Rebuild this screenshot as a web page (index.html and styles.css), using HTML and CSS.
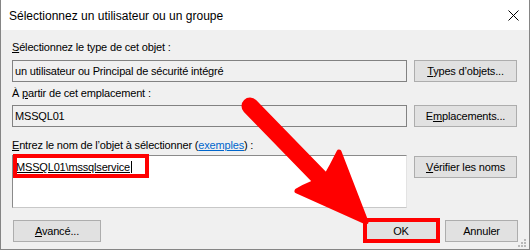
FILE: index.html
```html
<!DOCTYPE html>
<html lang="fr">
<head>
<meta charset="utf-8">
<title>Sélectionnez un utilisateur ou un groupe</title>
<link rel="stylesheet" href="styles.css">
</head>
<body>
<div class="window">
  <div class="titlebar">
    <span class="title">Sélectionnez un utilisateur ou un groupe</span>
    <svg class="close" width="11" height="11" viewBox="0 0 11 11"><path d="M0.5 0.5 L10.5 10.5 M10.5 0.5 L0.5 10.5" stroke="#000" stroke-width="1" fill="none"/></svg>
  </div>
  <div class="content">
    <div class="label l1"><u>S</u>électionnez le type de cet objet :</div>
    <div class="row r1">
      <div class="field">un utilisateur ou Principal de sécurité intégré</div>
      <div class="btn"><span><u>T</u>ypes d’objets...</span></div>
    </div>
    <div class="label l2">À <u>p</u>artir de cet emplacement :</div>
    <div class="row r2">
      <div class="field">MSSQL01</div>
      <div class="btn"><span>E<u>m</u>placements...</span></div>
    </div>
    <div class="label l3"><u>E</u>ntrez le nom de l’objet à sélectionner (<span class="link">exemples</span>) :</div>
    <div class="row r3">
      <div class="area"><span class="name">MSSQL01\mssqlservice</span></div>
      <div class="btn verify"><span><u>V</u>érifier les noms</span></div>
    </div>
    <div class="footer">
      <div class="btn adv"><span><u>A</u>vancé...</span></div>
      <div class="spacer"></div>
      <div class="btn ok"><span>OK</span></div>
      <div class="btn cancel"><span>Annuler</span></div>
    </div>
  </div>
  <svg class="grip" width="9" height="9" viewBox="0 0 9 9">
    <rect x="6" y="0" width="2" height="2" fill="#b8b8b8"/>
    <rect x="3" y="3" width="2" height="2" fill="#b8b8b8"/>
    <rect x="6" y="3" width="2" height="2" fill="#b8b8b8"/>
    <rect x="0" y="6" width="2" height="2" fill="#b8b8b8"/>
    <rect x="3" y="6" width="2" height="2" fill="#b8b8b8"/>
    <rect x="6" y="6" width="2" height="2" fill="#b8b8b8"/>
  </svg>
  <div class="mark mark-name"></div>
  <div class="mark mark-ok"></div>
  <svg class="arrow" width="530" height="251" viewBox="0 0 530 251">
    <line x1="250" y1="106" x2="322" y2="180" stroke="#ff0000" stroke-width="17" stroke-linecap="round"/>
    <path d="M366 222 L297 191 Q312 182 324 180 Q332 166 339 152 Z" fill="#ff0000" stroke="#ff0000" stroke-width="5" stroke-linejoin="round"/>
  </svg>
</div>
</body>
</html>
```
FILE: styles.css
```css
html, body {
  margin: 0;
  padding: 0;
  background: #ffffff;
}

body {
  font-family: "Liberation Sans", Arial, sans-serif;
  font-size: 11px;
  color: #000;
}

.window {
  position: relative;
  width: 530px;
  height: 250px;
  box-sizing: border-box;
  border: 1px solid #858585;
  border-top: 0;
  background: #f0f0f0;
  display: flex;
  flex-direction: column;
}

.titlebar {
  height: 30px;
  box-sizing: border-box;
  background: #ffffff;
  display: flex;
  align-items: flex-start;
  padding: 2px 10px 0 8px;
}

.title {
  flex: 1;
  font-size: 12px;
  line-height: 28px;
  white-space: nowrap;
}

.close {
  margin-top: 8px;
}

.content {
  padding: 0 11px;
  display: flex;
  flex-direction: column;
  letter-spacing: -0.17px;
}

.label {
  line-height: 13px;
  white-space: nowrap;
}

.l1 { margin-top: 11px; }
.l2 { margin-top: 5px; }
.l3 { margin-top: 12px; }

.row {
  display: flex;
  gap: 7px;
  align-items: flex-start;
}

.r1 { margin-top: 6px; }
.r2 { margin-top: 5px; }
.r3 { margin-top: 3px; }

.field {
  width: 395px;
  height: 22px;
  box-sizing: border-box;
  border: 1px solid #828282;
  padding: 0 2px;
  line-height: 20px;
  white-space: nowrap;
}

.btn {
  width: 103px;
  height: 22px;
  box-sizing: border-box;
  border: 1px solid #adadad;
  background: #e1e1e1;
  display: flex;
  align-items: center;
  justify-content: center;
  line-height: 13px;
  white-space: nowrap;
}

.area {
  width: 395px;
  height: 53px;
  box-sizing: border-box;
  background: #ffffff;
  border-style: solid;
  border-width: 1px;
  border-color: #8a8a8a #e3e3e3 #c8c8c8 #8a8a8a;
  padding: 5px 3px;
  line-height: 13px;
}

.name {
  text-decoration: underline;
  border-right: 1px solid #000;
  padding-right: 1px;
}

.verify {
  margin-top: 1px;
}

.link {
  color: #0066cc;
  text-decoration: underline;
}

.footer {
  margin-top: 12px;
  display: flex;
  align-items: flex-start;
  margin-left: 1px;
}

.adv { width: 88px; }
.spacer { flex: 1; }
.ok { width: 74px; }
.cancel { width: 73px; margin-left: 7px; }

.grip {
  position: absolute;
  right: 2px;
  bottom: 1px;
}

.mark {
  position: absolute;
  box-sizing: border-box;
  border: 4px solid #ff0000;
}

.mark-name {
  left: 12px;
  top: 154px;
  width: 136px;
  height: 24px;
}

.mark-ok {
  left: 362px;
  top: 218px;
  width: 77px;
  height: 25px;
}

.arrow {
  position: absolute;
  left: -1px;
  top: 0;
  pointer-events: none;
}
```
